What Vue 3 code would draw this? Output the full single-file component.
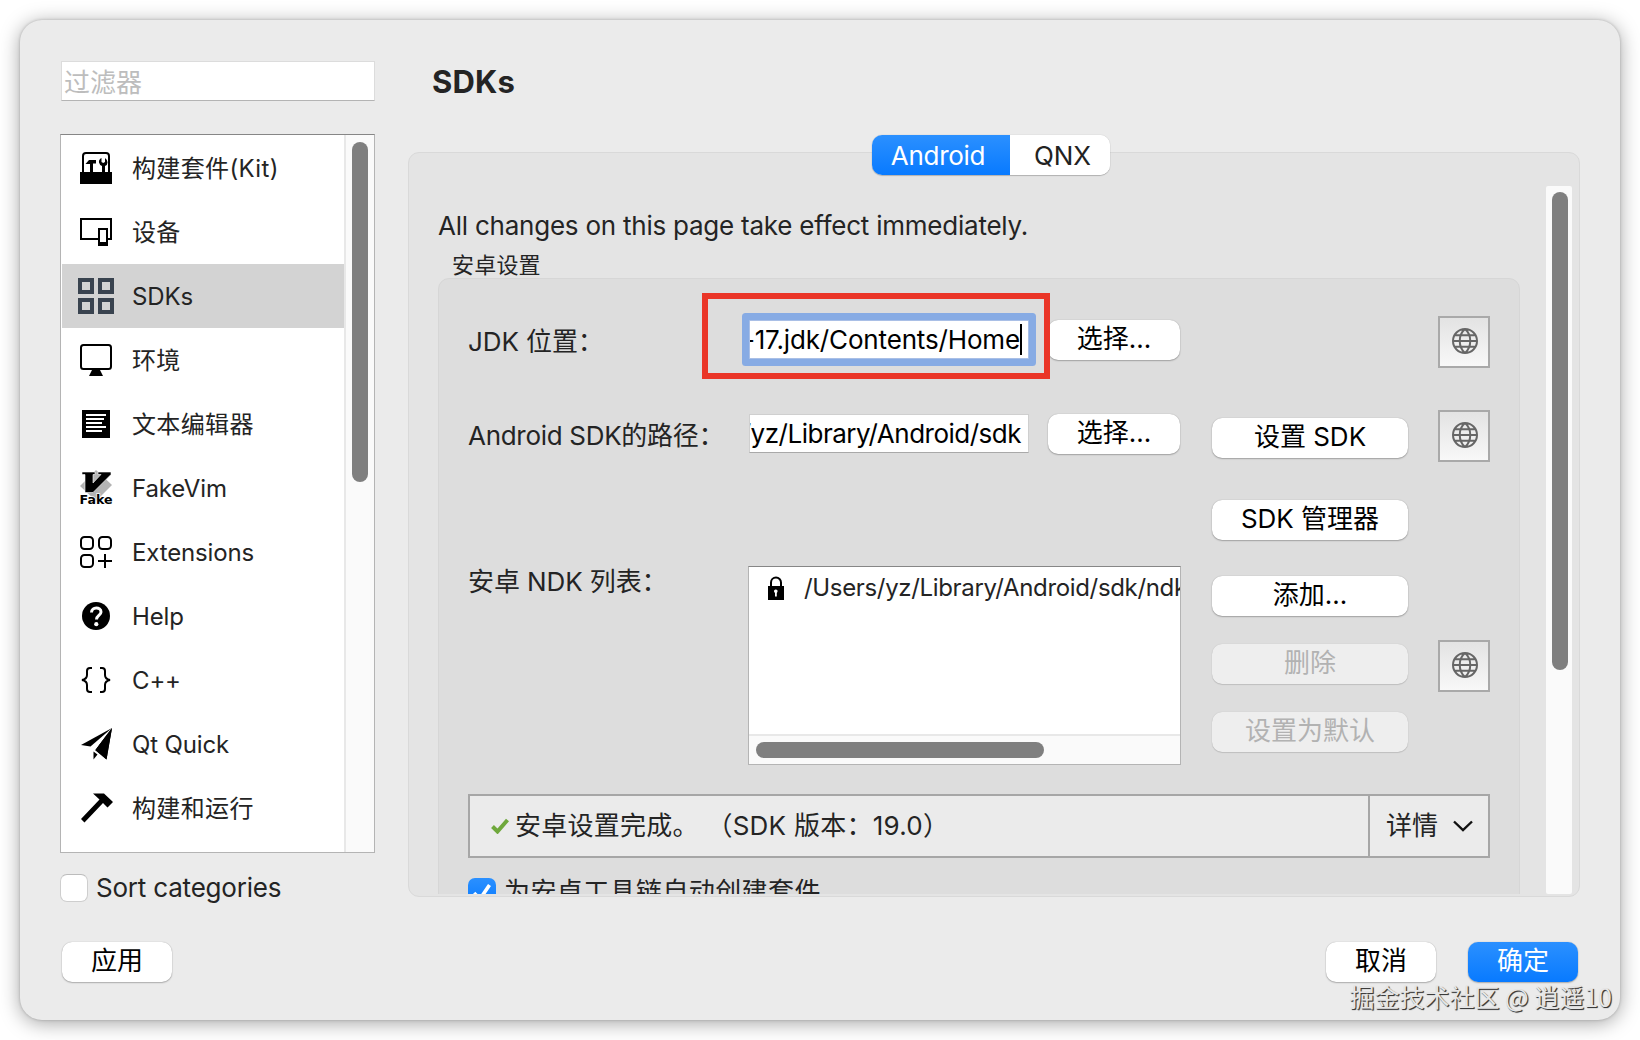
<template>
  <div class="dialog">
    <div class="body">
      <aside class="sidebar">
        <input class="filter" type="text" placeholder="过滤器" />

        <div class="category-list">
          <ul class="categories">
            <li
              v-for="item in categories"
              :key="item.icon"
              class="category"
              :class="{ selected: item.icon === current }"
              @click="current = item.icon"
            >
              <svg class="category-icon" viewBox="0 0 36 36">
                <template v-if="item.icon === 'kit'">
                  <path d="M5 22V6q0-3 3-3h20q3 0 3 3v16" fill="none" stroke="#000" stroke-width="2" />
                  <rect x="2" y="22" width="32" height="12" />
                  <path d="M7.500 14l3.500-4h7v3.500h-3V22h-3v-8z" />
                  <path d="M23.500 8q-3 1.500-2.500 4.500.5 2.500 3 3.500v6h3v-6q2.500-1 2.500-3.500 0-3-2.500-4.500v4l-1.800 1-1.700-1z" />
                </template>
                <template v-else-if="item.icon === 'devices'">
                  <path d="M20 25H3V5h30v20h-4" fill="none" stroke="#000" stroke-width="2" />
                  <path d="M20 14h10v18H20zM22 16v12h6V16z" fill-rule="evenodd" />
                </template>
                <template v-else-if="item.icon === 'sdks'">
                  <g fill="none" stroke="#39434f" stroke-width="4">
                    <rect x="2" y="2" width="12" height="12" />
                    <rect x="22" y="2" width="12" height="12" />
                    <rect x="2" y="22" width="12" height="12" />
                    <rect x="22" y="22" width="12" height="12" />
                  </g>
                </template>
                <template v-else-if="item.icon === 'environment'">
                  <rect x="3" y="3" width="30" height="24" rx="2.500" fill="none" stroke="#000" stroke-width="2" />
                  <path d="M14 28h8l3 6H11z" />
                </template>
                <template v-else-if="item.icon === 'editor'">
                  <rect x="4" y="4" width="28" height="28" />
                  <path d="M8 9h20M8 13h18M8 17h16M8 21h20M8 25h16" stroke="#fff" stroke-width="1.800" />
                </template>
                <template v-else-if="item.icon === 'fakevim'">
                  <path d="M18 0l16 15-16 16L2 16z" fill="#b3b3b3" />
                  <path d="M4 2h13v2.500h-2V13l8-8.500h-3V2h13v2.500L15 22.500H7v-18H4z" stroke="#fff" stroke-width="0.600" />
                  <text x="1.500" y="33.500" textLength="33" lengthAdjust="spacingAndGlyphs" class="fake-text">Fake</text>
                </template>
                <template v-else-if="item.icon === 'extensions'">
                  <g fill="none" stroke="#000" stroke-width="2">
                    <rect x="3" y="3" width="12" height="12" rx="3.500" />
                    <rect x="21" y="3" width="12" height="12" rx="3.500" />
                    <rect x="3" y="21" width="12" height="12" rx="3.500" />
                    <path d="M27 20v14M20 27h14" />
                  </g>
                </template>
                <template v-else-if="item.icon === 'help'">
                  <circle cx="18" cy="18" r="14" />
                  <path d="M13.500 14.500c0-6 9.500-6 9.500-.5 0 3.500-4.500 3.500-4.500 7.500" fill="none" stroke="#fff" stroke-width="3" />
                  <circle cx="18.300" cy="26.200" r="2.100" fill="#fff" />
                </template>
                <template v-else-if="item.icon === 'cpp'">
                  <g fill="none" stroke="#000" stroke-width="2">
                    <path d="M14 6h-2q-3 0-3 3v4q0 4-5 5 5 1 5 5v4q0 3 3 3h2" />
                    <path d="M22 6h2q3 0 3 3v4q0 4 5 5-5 1-5 5v4q0 3-3 3h-2" />
                  </g>
                </template>
                <template v-else-if="item.icon === 'quick'">
                  <path d="M34 2L12.500 20.500 3 19z" />
                  <path d="M34 2l-5.500 31.500L17 24z" />
                  <path d="M15.500 25.500l4 3-4 5z" />
                  <path d="M27 10L14 22.500l2.500 2.500z" fill="#fff" />
                  <path d="M34 2L17.500 24l11 9.500z" />
                </template>
                <template v-else>
                  <path d="M15 3.500h11L35 12l-5.500 5.500-4.500-4.500L6.500 32.500 3 29 21.500 9.500z" />
                </template>
              </svg>
              <span :class="{ latin: item.latin }">{{ item.label }}</span>
            </li>
          </ul>
          <div class="list-track">
            <div class="list-thumb"></div>
          </div>
        </div>

        <label class="sort">
          <span class="checkbox"></span>
          <span>Sort categories</span>
        </label>
      </aside>

      <main class="content">
        <h1 class="title">SDKs</h1>

        <div class="tabs">
          <button class="tab" :class="{ active: tab === 'Android' }" @click="tab = 'Android'">Android</button>
          <button class="tab" :class="{ active: tab === 'QNX' }" @click="tab = 'QNX'">QNX</button>
        </div>

        <div class="panel">
          <div class="page">
            <p class="intro">All changes on this page take effect immediately.</p>
            <div class="group-title">安卓设置</div>

            <section class="group">
              <div class="row jdk-row">
                <span class="label">JDK 位置：</span>
                <div class="field">
                  <div class="path focused"><span>-17.jdk/Contents/Home</span><i class="caret"></i></div>
                  <button class="btn choose">选择...</button>
                  <div class="highlight"></div>
                </div>
                <span></span>
                <button class="globe"><svg viewBox="0 0 26 26"><path :d="globePath" /></svg></button>
              </div>

              <div class="row sdk-row">
                <span class="label">Android SDK的路径：</span>
                <div class="field">
                  <div class="path sdk-path"><span>/yz/Library/Android/sdk</span></div>
                  <button class="btn choose">选择...</button>
                </div>
                <button class="btn setup">设置 SDK</button>
                <button class="globe"><svg viewBox="0 0 26 26"><path :d="globePath" /></svg></button>
              </div>

              <div class="row manager-row">
                <button class="btn manager">SDK 管理器</button>
              </div>

              <div class="row ndk-row">
                <span class="label">安卓 NDK 列表：</span>
                <div class="ndk-list">
                  <div class="ndk-item">
                    <svg class="lock" viewBox="0 0 16 24">
                      <path d="M3 11V6.500a5 5 0 0 1 10 0V11" fill="none" stroke="#000" stroke-width="2" />
                      <rect x="0" y="10" width="16" height="14" />
                      <path d="M6.200 16a1.800 1.800 0 1 1 3.200 0l-.6 1v3.500H7V17z" fill="#fff" />
                    </svg>
                    <span>/Users/yz/Library/Android/sdk/ndk</span>
                  </div>
                  <div class="ndk-track">
                    <div class="ndk-thumb"></div>
                  </div>
                </div>
                <div class="ndk-actions">
                  <button class="btn">添加...</button>
                  <button class="btn" disabled>删除</button>
                  <button class="btn" disabled>设置为默认</button>
                </div>
                <button class="globe"><svg viewBox="0 0 26 26"><path :d="globePath" /></svg></button>
              </div>

              <div class="status">
                <div class="status-text">
                  <svg class="ok" viewBox="0 0 18 16">
                    <path d="M1.500 8.500l5 5L16.500 2" fill="none" stroke="#6fa83c" stroke-width="4" />
                  </svg>
                  <span>安卓设置完成。 （SDK 版本：19.0）</span>
                </div>
                <button class="details">
                  <span>详情</span>
                  <svg viewBox="0 0 20 12">
                    <path d="M1 1.500l9 8.500 9-8.500" fill="none" stroke="#111" stroke-width="2.400" />
                  </svg>
                </button>
              </div>

              <label class="auto-kit">
                <span class="checkbox checked">
                  <svg viewBox="0 0 28 28">
                    <path d="M6 15l6 6L21.500 7" fill="none" stroke="#fff" stroke-width="3.600" />
                  </svg>
                </span>
                <span>为安卓工具链自动创建套件</span>
              </label>
            </section>
          </div>
          <div class="page-track">
            <div class="page-thumb"></div>
          </div>
        </div>
      </main>
    </div>

    <footer class="footer">
      <button class="btn small apply">应用</button>
      <button class="btn small">取消</button>
      <button class="btn small primary">确定</button>
    </footer>

    <div class="watermark">掘金技术社区 @ 逍遥10</div>
  </div>
</template>

<script setup>
import { ref } from 'vue'

const categories = [
  { icon: 'kit', label: '构建套件(Kit)' },
  { icon: 'devices', label: '设备' },
  { icon: 'sdks', label: 'SDKs', latin: true },
  { icon: 'environment', label: '环境' },
  { icon: 'editor', label: '文本编辑器' },
  { icon: 'fakevim', label: 'FakeVim', latin: true },
  { icon: 'extensions', label: 'Extensions', latin: true },
  { icon: 'help', label: 'Help', latin: true },
  { icon: 'cpp', label: 'C++', latin: true },
  { icon: 'quick', label: 'Qt Quick', latin: true },
  { icon: 'build', label: '构建和运行' }
]

const globePath =
  'M13 1a12 12 0 1 0 0 24a12 12 0 1 0 0-24zM13 1c-7 6-7 18 0 24M13 1c7 6 7 18 0 24M1 13h24M3 7.200h20M3 18.800h20'

const current = ref('sdks')
const tab = ref('Android')
</script>

<style>
body {
  margin: 0;
  background: #fff;
}
</style>

<style scoped>
.dialog {
  position: relative;
  display: flex;
  flex-direction: column;
  box-sizing: border-box;
  width: 1600px;
  height: 1000px;
  margin: 20px;
  padding: 41px 40px 38px;
  border-radius: 22px;
  background: #ebebeb;
  box-shadow: 0 0 3px rgba(0, 0, 0, 0.22), 0 3px 20px rgba(0, 0, 0, 0.36);
  color: #242424;
  font-family: Inter, 'Noto Sans CJK SC', sans-serif;
  font-size: 26px;
  line-height: 30px;
  white-space: nowrap;
  text-spacing-trim: space-all;
}

button {
  margin: 0;
  padding: 0;
  border: 0;
  color: #000;
  font: inherit;
}

.body {
  display: flex;
  gap: 33px;
  height: 842px;
}

/* left column */
.sidebar {
  display: flex;
  flex-direction: column;
  width: 315px;
}

.filter {
  box-sizing: border-box;
  width: 314px;
  height: 40px;
  margin: 0 0 0 1px;
  padding: 2px 2px 0;
  border: 1px solid #dcdcdc;
  border-bottom: 1px solid #b4b4b4;
  border-radius: 0;
  background: #fff;
  font: inherit;
  outline: none;
}

.filter::placeholder {
  color: #bdbdbd;
}

.category-list {
  display: flex;
  box-sizing: border-box;
  height: 719px;
  margin-top: 33px;
  border: 1px solid #b4b4b4;
  border-top-color: #868686;
  background: #fff;
}

.categories {
  flex: 1;
  margin: 0;
  padding: 1px 0 0 1px;
  overflow: hidden;
  list-style: none;
}

.category {
  display: flex;
  align-items: center;
  gap: 18px;
  height: 64px;
  padding-left: 16px;
  font-size: 24px;
}

.category.selected {
  background: #d3d3d3;
}

.category-icon {
  width: 36px;
  height: 36px;
}

.category span {
  position: relative;
  top: 1px;
  letter-spacing: 0.35px;
}

.category .latin {
  letter-spacing: -0.15px;
}

.fake-text {
  font-family: 'DejaVu Sans', sans-serif;
  font-size: 13px;
  font-weight: bold;
  stroke: #fff;
  stroke-width: 1.5px;
  paint-order: stroke;
}

.list-track {
  box-sizing: border-box;
  width: 30px;
  padding: 7px 0 0 6px;
  border-left: 2px solid #e8e8e8;
  background: #fafafa;
}

.list-thumb {
  width: 16px;
  height: 340px;
  border-radius: 8px;
  background: #7f7f7f;
}

.sort {
  display: flex;
  align-items: center;
  gap: 8px;
  margin-top: 20px;
  letter-spacing: -0.2px;
}

.checkbox {
  box-sizing: border-box;
  width: 28px;
  height: 28px;
  border: 1px solid #cecece;
  border-top-color: #bcbcbc;
  border-radius: 7px;
  background: #fff;
}

.checkbox.checked {
  border: 0;
  background: linear-gradient(#2b90ff, #087aff);
}

/* right column */
.content {
  display: flex;
  flex-direction: column;
  width: 1172px;
}

.title {
  height: 74px;
  margin: 0;
  padding-left: 24px;
  font-size: 31px;
  font-weight: 700;
  line-height: 42px;
  letter-spacing: 0.2px;
}

.tabs {
  position: relative;
  z-index: 1;
  display: flex;
  align-self: center;
  height: 40px;
  margin: 0 6px -23px 0;
  border-radius: 10px;
  background: #fff;
  box-shadow: 0 0 1px rgba(0, 0, 0, 0.3), 0 1px 1px rgba(0, 0, 0, 0.2);
  overflow: hidden;
}

.tab {
  width: 100px;
  padding: 2px 0 0 5px;
  background: #fff;
  color: #222;
}

.tab.active {
  width: 138px;
  padding: 2px 6px 0 0;
  background: linear-gradient(#2b90ff, #087aff);
  color: #fff;
  letter-spacing: -0.3px;
}

.panel {
  display: flex;
  box-sizing: border-box;
  height: 745px;
  padding: 33px 7px 2px 0;
  border: 1px solid #d9d9d9;
  border-radius: 11px;
  background: #e4e4e4;
}

.page {
  flex: 1;
  padding-left: 29px;
  overflow: hidden;
}

.page-track {
  box-sizing: border-box;
  width: 26px;
  padding: 6px 0 0 6px;
  border-radius: 2px;
  background: #fafafa;
}

.page-thumb {
  width: 16px;
  height: 478px;
  border-radius: 8px;
  background: #7f7f7f;
}

.intro {
  margin: 25px 0 11px;
  letter-spacing: -0.23px;
}

.group-title {
  padding-left: 14px;
  font-size: 22px;
  line-height: 26px;
  letter-spacing: 0.2px;
}

.group {
  box-sizing: border-box;
  width: 1082px;
  height: 660px;
  padding: 37px 29px 0;
  border: 1px solid #d6d6d6;
  border-radius: 11px;
  background: #dddddd;
}

.row {
  display: grid;
  grid-template-columns: 280px 433px 31px 196px 30px 52px;
  align-items: start;
}

.jdk-row {
  height: 94px;
}

.sdk-row {
  height: 90px;
}

.manager-row {
  height: 66px;
}

.ndk-row {
  height: 228px;
}

.label {
  margin-top: 11px;
  letter-spacing: -0.1px;
}

.sdk-row .label {
  letter-spacing: -0.3px;
}

.ndk-row .label {
  margin-top: 1px;
}

.field {
  position: relative;
  display: flex;
  gap: 19px;
  padding: 4px 0 0 1px;
}

.path {
  display: flex;
  align-items: center;
  justify-content: flex-end;
  box-sizing: border-box;
  width: 280px;
  height: 39px;
  padding-right: 7px;
  border: 1px solid #cfcfcf;
  border-bottom-color: #a9a9a9;
  background: #fff;
  color: #000;
  overflow: hidden;
}

.path.focused {
  border-color: #a9bfe6;
  border-radius: 1px;
  box-shadow: 0 0 0 7px #87abe4;
  letter-spacing: -0.15px;
}

.sdk-path {
  letter-spacing: -0.5px;
}

.caret {
  flex: none;
  width: 2px;
  height: 31px;
  margin-right: -1px;
  background: #000;
}

/* annotation frame round the focused field */
.highlight {
  position: absolute;
  top: -23px;
  left: -46px;
  box-sizing: border-box;
  width: 348px;
  height: 86px;
  border: 6px solid #ea3527;
}

.btn {
  height: 40px;
  padding-bottom: 3px;
  border-radius: 10px;
  background: #fff;
  box-shadow: 0 0 1px rgba(0, 0, 0, 0.3), 0 1px 1.5px rgba(0, 0, 0, 0.25);
}

.btn:disabled {
  background: #eeeeee;
  color: #b2b2b2;
  box-shadow: 0 0 1px rgba(0, 0, 0, 0.18), 0 1px 1px rgba(0, 0, 0, 0.12);
}

.choose {
  width: 132px;
}

.setup {
  grid-column: 4;
  margin-top: 8px;
}

.manager {
  grid-column: 4;
}

.globe {
  grid-column: 6;
  display: flex;
  align-items: center;
  justify-content: center;
  box-sizing: border-box;
  width: 52px;
  height: 52px;
  padding: 0 0 2px 2px;
  border: 2px solid #a9a9a9;
  background: linear-gradient(#e3e3e3, #f8f8f8);
}

.globe svg {
  width: 26px;
  height: 26px;
  fill: none;
  stroke: #666;
  stroke-width: 2;
}

.ndk-list {
  display: flex;
  flex-direction: column;
  justify-content: space-between;
  box-sizing: border-box;
  height: 199px;
  border: 1px solid #b4b4b4;
  border-top-color: #868686;
  background: #fff;
  overflow: hidden;
}

.ndk-item {
  display: flex;
  align-items: center;
  gap: 20px;
  padding: 6px 0 0 19px;
  font-size: 24px;
  letter-spacing: -0.34px;
}

.lock {
  flex: none;
  width: 16px;
  height: 24px;
}

.ndk-track {
  box-sizing: border-box;
  height: 30px;
  padding: 6px 0 0 7px;
  border-top: 2px solid #e8e8e8;
  background: #fafafa;
}

.ndk-thumb {
  width: 288px;
  height: 16px;
  border-radius: 8px;
  background: #7f7f7f;
}

.ndk-actions {
  grid-column: 4;
  display: flex;
  flex-direction: column;
  gap: 28px;
  padding-top: 10px;
}

.ndk-row .globe {
  margin-top: 74px;
}

.status {
  display: flex;
  box-sizing: border-box;
  width: 1022px;
  height: 64px;
  border: 2px solid #a6a6a6;
  background: #ebebeb;
}

.status-text {
  flex: 1;
  display: flex;
  align-items: center;
  gap: 6px;
  padding-left: 21px;
  letter-spacing: 0.26px;
}

.ok {
  width: 18px;
  height: 16px;
}

.details {
  display: flex;
  align-items: center;
  gap: 15px;
  box-sizing: border-box;
  width: 120px;
  padding-left: 16px;
  border-left: 2px solid #a6a6a6;
  background: #ebebeb;
  color: #242424;
}

.details svg {
  width: 20px;
  height: 12px;
}

.auto-kit {
  display: flex;
  align-items: center;
  gap: 8px;
  margin-top: 19px;
  letter-spacing: 0.4px;
}

.footer {
  display: flex;
  gap: 32px;
  margin-top: 39px;
  padding: 0 2px;
}

.small {
  width: 110px;
}

.apply {
  margin-right: auto;
}

.primary {
  background: linear-gradient(#2b90ff, #087aff);
  color: #fff;
}

.watermark {
  position: absolute;
  right: 8px;
  bottom: 9px;
  color: #e6e6e6;
  font-family: 'Noto Sans CJK SC', sans-serif;
  font-size: 25px;
  text-shadow: 1px 1px 1px #333, 1px 1px 0 #777;
}
</style>
